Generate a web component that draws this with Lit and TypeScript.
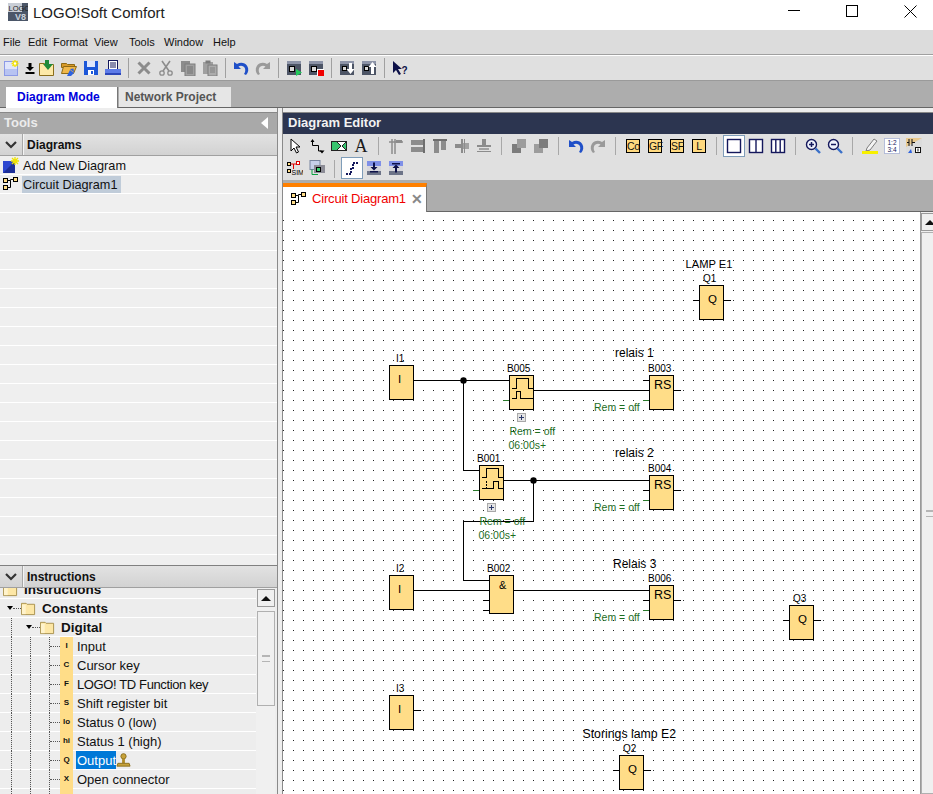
import {LitElement, html, svg, css} from 'lit';
import {customElement} from 'lit/decorators.js';

const NAVY = '#14185c';
const GRAY = '#8c8c8c';

// toolbar glyphs, all in a 16x16 box
const icons: Record<string, unknown> = {
  newDoc: svg`<rect x="0.5" y="1.5" width="13" height="14" fill="#dfe5fb" stroke="#8c9ae6"/><rect x="1" y="9" width="12" height="6" fill="#b7c3f2"/><path d="M11 0v7M7.5 3.5h7M8.5 1l5 5M13.5 1l-5 5" stroke="#f5e400" stroke-width="1.4"/><circle cx="11" cy="3.5" r="1.2" fill="#fff"/>`,
  download: svg`<path d="M6.5 3h3v4h2.5L8 11 4 7h2.5z" fill="#000"/><rect x="3.5" y="12" width="9" height="2" fill="#000"/>`,
  openGreen: svg`<path d="M0.5 3.5h5l1 1h8v11h-14z" fill="#fde9a8" stroke="#8a6d1c"/><path d="M6 0h4v4h4l-5 6-5-6h2z" fill="#1f8a3a"/>`,
  folder: svg`<path d="M0.5 3.5h5l1 1h7v3h-13z" fill="#d89a2a" stroke="#8f6a14"/><path d="M0.5 13.5l2-7h13l-3 7z" fill="#f0b84a" stroke="#8f6a14"/><path d="M6 16l3-6 4 3-3 3z" fill="#2d62e0"/><path d="M9 9l3.5-.5.5 4z" fill="#2d62e0"/>`,
  save: svg`<rect x="1" y="1" width="14" height="14" fill="#1c57d8"/><rect x="4" y="1" width="8" height="6" fill="#dfe7fb"/><rect x="5" y="10" width="6" height="5" fill="#fff"/><rect x="8" y="11" width="2" height="3" fill="#1c57d8"/>`,
  print: svg`<rect x="3.5" y="0.5" width="9" height="9" fill="#fff" stroke="${NAVY}"/><path d="M5 3h6M5 5h6M5 7h6" stroke="${NAVY}"/><rect x="0" y="9" width="16" height="4" fill="#5d7be8"/><rect x="0" y="13" width="16" height="2" fill="#2c46b8"/>`,
  cross: svg`<path d="M2.5 2.5l11 11M13.5 2.5l-11 11" stroke="${GRAY}" stroke-width="3"/>`,
  scissors: svg`<path d="M4 1l7 10M12 1L5 11" stroke="${GRAY}" stroke-width="1.6"/><circle cx="4" cy="13" r="2.2" fill="none" stroke="${GRAY}" stroke-width="1.3"/><circle cx="12" cy="13" r="2.2" fill="none" stroke="${GRAY}" stroke-width="1.3"/>`,
  copy: svg`<rect x="1" y="1" width="9" height="11" fill="${GRAY}"/><rect x="5" y="4" width="10" height="12" fill="#a0a0a0" stroke="#7c7c7c"/><path d="M7 7h6M7 9h6M7 11h6M7 13h6" stroke="#737373"/>`,
  paste: svg`<rect x="1" y="2" width="10" height="12" fill="#a0a0a0"/><rect x="3.5" y="0.5" width="5" height="3" fill="#7c7c7c"/><rect x="6" y="5" width="9" height="11" fill="#ababab" stroke="#7c7c7c"/><path d="M8 8h5M8 10h5M8 12h5" stroke="#808080"/>`,
  undo: svg`<path d="M1 2v7h7L5.500 6.500C8 5 11 6 12 8.500c.6 1.800.2 3.800-1 5.500l2 1c2.500-2.500 3-6 1.200-9C12 2.500 7.500 1.800 4 4z" fill="#2050c8"/>`,
  redo: svg`<path d="M15 2v7H8l2.500-2.500C8 5 5 6 4 8.500c-.6 1.800-.2 3.800 1 5.500l-2 1C.5 12.500 0 9 1.800 6 4 2.500 8.500 1.800 12 4z" fill="#9a9a9a"/>`,
  simStart: svg`<rect x="1" y="1" width="14" height="14" fill="#4d5566"/><rect x="1" y="1" width="14" height="3" fill="#8d94a8"/><rect x="3.500" y="6.500" width="5" height="5" fill="#d8d8d8" stroke="#000"/><path d="M10 9l6 3.500-6 3.500z" fill="#22c95a"/>`,
  simStop: svg`<rect x="1" y="1" width="14" height="14" fill="#4d5566"/><rect x="1" y="1" width="14" height="3" fill="#8d94a8"/><rect x="3.500" y="6.500" width="5" height="5" fill="#d8d8d8" stroke="#000"/><rect x="9" y="9" width="7" height="7" fill="#fff"/><rect x="10" y="10" width="6" height="6" fill="#f00000"/>`,
  xferDown: svg`<rect x="1" y="1" width="14" height="14" fill="#4d5566"/><rect x="1" y="1" width="14" height="3" fill="#8d94a8"/><rect x="3.500" y="6.500" width="4" height="4" fill="#d8d8d8" stroke="#000"/><path d="M10 3h3v6h2.500L11.500 14 7.500 9H10z" fill="#fff"/>`,
  xferUp: svg`<rect x="1" y="1" width="14" height="14" fill="#4d5566"/><rect x="1" y="1" width="14" height="3" fill="#8d94a8"/><rect x="3.500" y="6.500" width="4" height="4" fill="#d8d8d8" stroke="#000"/><path d="M10 14h3V7h2.500L11.500 2 7.500 7H10z" fill="#fff"/>`,
  help: svg`<path d="M1 1v12l3-3 3 5 2-1-3-5h4z" fill="#0c1048"/><text x="9.500" y="14" font-size="10" font-weight="700" fill="#0c1048">?</text>`,
  pointer: svg`<path d="M4 1v12l3-3 2.500 5 2-1-2.500-5h4z" fill="#fff" stroke="#000"/>`,
  route: svg`<path d="M3.500 3v4.500h6V13h3" fill="none" stroke="#000"/><path d="M1.500 4l2-3 2 3zM10.500 12.500h5L13 15.500z" fill="#000"/>`,
  diode: svg`<rect x="0.500" y="3.500" width="15" height="9" fill="#fff" stroke="#222"/><path d="M1 4h5l4 4-4 4H1z" fill="#37c46e"/><path d="M15 4v8l-4-4z" fill="#37c46e"/><path d="M6 4l4 4-4 4M15 4l-4 4 4 4" fill="none" stroke="#222"/>`,
  letterA: svg`<text x="8" y="14" text-anchor="middle" font-family="Liberation Serif, serif" font-size="18" fill="#1a1a1a">A</text>`,
  alignL: svg`<path d="M4 1v15M7 1v15M1 4h14" stroke="${GRAY}" stroke-width="1.500" fill="none"/><rect x="8" y="2" width="6" height="3" fill="${GRAY}"/>`,
  alignR: svg`<rect x="1" y="2" width="12" height="5" fill="${GRAY}"/><rect x="1" y="9" width="12" height="5" fill="${GRAY}"/><rect x="13" y="1" width="2" height="14" fill="#6e6e6e"/>`,
  alignT: svg`<rect x="1" y="1" width="14" height="2" fill="#6e6e6e"/><rect x="2" y="3" width="5" height="12" fill="${GRAY}"/><rect x="9" y="3" width="5" height="9" fill="${GRAY}"/>`,
  alignM: svg`<rect x="7" y="1" width="2" height="14" fill="${GRAY}"/><rect x="1" y="6" width="6" height="4" fill="${GRAY}"/><rect x="9" y="5" width="6" height="6" fill="#a2a2a2"/><rect x="10" y="1" width="1" height="14" fill="${GRAY}"/>`,
  alignC: svg`<rect x="1" y="7" width="14" height="2" fill="${GRAY}"/><rect x="6" y="1" width="4" height="6" fill="${GRAY}"/><rect x="3" y="10" width="10" height="2" fill="#a2a2a2"/><rect x="1" y="13" width="14" height="1" fill="${GRAY}"/>`,
  groupA: svg`<rect x="1" y="6" width="9" height="9" fill="#7c7c7c"/><rect x="6" y="1" width="9" height="9" fill="#9c9c9c"/>`,
  groupB: svg`<rect x="1" y="6" width="9" height="9" fill="#9c9c9c"/><rect x="6" y="1" width="9" height="9" fill="#7c7c7c"/>`,
  col1: svg`<rect x="1.500" y="1.500" width="13" height="13" fill="#fff" stroke="${NAVY}" stroke-width="1.400"/>`,
  col2: svg`<rect x="1.500" y="1.500" width="13" height="13" fill="#fff" stroke="${NAVY}" stroke-width="1.400"/><path d="M8 2v12" stroke="${NAVY}" stroke-width="1.400"/>`,
  col3: svg`<rect x="1.500" y="1.500" width="13" height="13" fill="#fff" stroke="${NAVY}" stroke-width="1.400"/><path d="M5.800 2v12M10.200 2v12" stroke="${NAVY}" stroke-width="1.400"/>`,
  zoomIn: svg`<circle cx="6.500" cy="6.500" r="5" fill="#eef1fb" stroke="${NAVY}" stroke-width="1.400"/><path d="M4 6.500h5M6.500 4v5" stroke="${NAVY}" stroke-width="1.500"/><path d="M10.500 10.500l4.500 4.500" stroke="#3a70c8" stroke-width="2.400"/>`,
  zoomOut: svg`<circle cx="6.500" cy="6.500" r="5" fill="#eef1fb" stroke="${NAVY}" stroke-width="1.400"/><path d="M4 6.500h5" stroke="${NAVY}" stroke-width="1.500"/><path d="M10.500 10.500l4.500 4.500" stroke="#3a70c8" stroke-width="2.400"/>`,
  marker: svg`<path d="M5 10l7-9 3 2-7 9-4 1z" fill="#f4f4f4" stroke="#7d7d7d"/><rect x="0" y="13" width="16" height="3" fill="#f7f000"/>`,
  numbers: svg`<rect x="0.500" y="0.500" width="15" height="15" fill="#fff" stroke="#7c8cc4" stroke-dasharray="1 1"/><text x="8" y="7" text-anchor="middle" font-size="6.500" fill="${NAVY}">1:2</text><text x="8" y="14" text-anchor="middle" font-size="6.500" fill="${NAVY}">3:4</text>`,
  pins: svg`<rect x="0" y="0" width="16" height="16" fill="#e9c98e"/><path d="M0 16V9L16 0v16z" fill="#dcdcdc"/><path d="M3 1v7M6 1v7M1 4.500h2M6 4.500h3" stroke="#111"/><path d="M2 15l3-4 1 4z" fill="#2d62e0"/><rect x="9.500" y="9.500" width="5" height="5" fill="#fff" stroke="#111"/><path d="M12 10.500v3" stroke="#111"/>`,
  sim: svg`<rect x="0.500" y="2.500" width="3" height="3" fill="#ffdd88" stroke="#000"/><rect x="0.500" y="9.500" width="3" height="3" fill="#ffdd88" stroke="#000"/><path d="M3.500 4h3v5M6.500 4H9" stroke="#e00000" fill="none"/><rect x="9.500" y="1.500" width="3" height="3" fill="#fff" stroke="#e00000"/><text x="4.500" y="14.500" font-size="7" fill="#000">SIM</text>`,
  layer: svg`<rect x="1" y="0.500" width="10" height="9" fill="#c6d0ea" stroke="#77849f"/><rect x="5" y="5" width="11" height="8" fill="#8c8c96"/><path d="M3 9.500v5h6" stroke="#0aa040" fill="none"/><rect x="7.500" y="7.500" width="4" height="4" fill="#37d070" stroke="#000"/>`,
  steps: svg`<path d="M2 14h5V8h2V3h5" fill="none" stroke="${NAVY}" stroke-width="2" stroke-dasharray="2 1"/>`,
  insDown: svg`<rect x="1" y="1" width="14" height="5" fill="#7f90e8"/><rect x="1" y="6" width="14" height="5" fill="#d7d7dd"/><rect x="1" y="11" width="14" height="4" fill="#6d7488"/><path d="M7 2.500h2V7h2.500L8 10.500 4.500 7H7z" fill="#0c1048"/><rect x="4" y="11" width="8" height="1.500" fill="#0c1048"/>`,
  insUp: svg`<rect x="1" y="1" width="14" height="5" fill="#7f90e8"/><rect x="1" y="6" width="14" height="5" fill="#d7d7dd"/><rect x="1" y="11" width="14" height="4" fill="#6d7488"/><path d="M7 12.500h2V8h2.500L8 4.500 4.500 8H7z" fill="#0c1048"/><rect x="4" y="3" width="8" height="1.500" fill="#0c1048"/>`,
  circuit: svg`<rect x="0.500" y="2.500" width="4" height="4" fill="#ffdd88" stroke="#000"/><rect x="0.500" y="9.500" width="4" height="4" fill="#ffdd88" stroke="#000"/><rect x="10.500" y="1.500" width="4" height="4" fill="#ffdd88" stroke="#000"/><path d="M4.500 4.500h3V3.500h3M7.500 4.500v7h-3" fill="none" stroke="#000"/>`,
  addDiagram: svg`<rect x="0" y="4" width="12" height="12" fill="#2d47d0"/><path d="M0 16L12 4v12z" fill="#1d2f98"/><path d="M12 0v8M8 4h8M9 1l6 6M15 1l-6 6" stroke="#f0e400" stroke-width="1.300"/>`,
  folderTree: svg`<path d="M0.500 2.500h5l1 1h8v11h-14z" fill="#fde7a6" stroke="#a8904c"/><rect x="1" y="4" width="4" height="10" fill="#fff3cc"/>`,
  stamp: svg`<circle cx="8" cy="3.500" r="2.800" fill="#c7a23a" stroke="#8a6d1c"/><rect x="6.500" y="6" width="3" height="5" fill="#b08c28"/><path d="M2 11h12l1 3H1z" fill="#c7a23a" stroke="#8a6d1c"/>`,
};

const ic = (name: string, size = 16) =>
  html`<svg width=${size} height=${size} viewBox="0 0 16 16" font-family="Liberation Sans, sans-serif">${icons[name]}</svg>`;

const mainTools = ['newDoc', 'download', 'openGreen', 'folder', 'save', 'print', '|', 'cross', 'scissors', 'copy', 'paste', '|', 'undo', 'redo', '|', 'simStart', 'simStop', '|', 'xferDown', 'xferUp', '|', 'help'];
const editorRow1 = ['pointer', 'route', 'diode', 'letterA', '|', 'alignL', 'alignR', 'alignT', 'alignM', 'alignC', '|', 'groupA', 'groupB', '|', 'undo', 'redo', '|', 'Co', 'GF', 'SF', 'L', '|', '*col1', 'col2', 'col3', '|', 'zoomIn', 'zoomOut', '|', 'marker', 'numbers', 'pins'];
const editorRow2 = ['sim', 'layer', '|', '*steps', 'insDown', 'insUp'];
const menus = ['File', 'Edit', 'Format', 'View', 'Tools', 'Window', 'Help'];

const leaves = [
  ['I', 'Input'], ['C', 'Cursor key'], ['F', 'LOGO! TD Function key'], ['S', 'Shift register bit'],
  ['lo', 'Status 0 (low)'], ['hi', 'Status 1 (high)'], ['Q', 'Output'], ['X', 'Open connector'], ['M', 'Flag'],
];

// diagram nodes use page coordinates, the viewBox of the canvas starts at 283,212
const blocks = [
  {x: 389, y: 365, h: 34, id: 'I1', lx: 396, sym: 'I'},
  {x: 509, y: 375, h: 34, id: 'B005', lx: 507, sym: ''},
  {x: 649, y: 375, h: 34, id: 'B003', lx: 648, sym: 'RS'},
  {x: 479, y: 465, h: 34, id: 'B001', lx: 477, sym: ''},
  {x: 649, y: 475, h: 34, id: 'B004', lx: 648, sym: 'RS'},
  {x: 389, y: 575, h: 34, id: 'I2', lx: 396, sym: 'I'},
  {x: 489, y: 575, h: 38, id: 'B002', lx: 487, sym: '&'},
  {x: 649, y: 585, h: 34, id: 'B006', lx: 648, sym: 'RS'},
  {x: 389, y: 695, h: 34, id: 'I3', lx: 396, sym: 'I'},
  {x: 699, y: 285, h: 34, id: 'Q1', lx: 703, sym: 'Q'},
  {x: 789, y: 605, h: 34, id: 'Q3', lx: 793, sym: 'Q'},
  {x: 619, y: 755, h: 34, id: 'Q2', lx: 623, sym: 'Q'},
];

const wires = 'M414 380.500H509M463.500 380.500V470.500H479M534 390.500H649M504 480.500H649M533.500 480.500V521.500H463.500V580.500H489M414 590.500H489M514 590.500H649'
  + 'M643 380.500H649M674 390.500H681M643 490.500H649M674 490.500H681M483 600.500H489M483 610.500H489M643 600.500H649M674 600.500H681'
  + 'M414 710.500H421M613 770.500H619M644 770.500H651M783 620.500H789M814 620.500H821M693 300.500H699M724 300.500H731';
const greenStubs = 'M503 400.500H509M643 400.500H649M473 490.500H479M643 500.500H649M643 610.500H649';
const pulses = 'M512 388.500H516V378.500H528V388.500H532.500M512 398.500H516V391.500H520V398.500H532.500'
  + 'M482 477.500H486V468.500H498V477.500H502.500M482 488.500H493V481.500H498V488.500H502.500';

const captions = [
  {x: 615, y: 357, t: 'relais 1', s: 12}, {x: 615, y: 457, t: 'relais 2', s: 12}, {x: 613, y: 568, t: 'Relais 3', s: 12},
  {x: 685.500, y: 268, t: 'LAMP E1', s: 11.200}, {x: 582.500, y: 738, t: 'Storings lamp E2', s: 12.300},
];
const greens = [
  {x: 594, y: 411, t: 'Rem = off'}, {x: 509.500, y: 435, t: 'Rem = off'}, {x: 508.500, y: 449, t: '06:00s+'},
  {x: 479.500, y: 525, t: 'Rem = off'}, {x: 478.500, y: 539, t: '06:00s+'}, {x: 594, y: 511, t: 'Rem = off'}, {x: 594, y: 621, t: 'Rem = off'},
];

@customElement('app-root')
export class AppRoot extends LitElement {
  static styles = css`
    :host {
      display: block;
      width: 933px;
      height: 794px;
      overflow: hidden;
      background: #efefef;
      color: #111;
      font-family: 'Liberation Sans', Arial, sans-serif;
      font-size: 12px;
    }
    svg { display: block; flex: none; }

    .titlebar { height: 30px; background: #fff; display: flex; align-items: center; padding-left: 8px; }
    .logo { margin-right: 5px; margin-top: -6px; }
    .app-title { font-size: 15px; margin-top: -6px; color: #222; }
    .win { margin-left: auto; display: flex; margin-top: -8px; margin-right: 16px; gap: 46px; }

    .menubar {
      height: 24px;
      background: #dcdcdc;
      border-bottom: 1px solid #a0a0a0;
      display: grid;
      grid-template-columns: 25px 25px 41px 35px 35px 49px auto;
      align-items: center;
      padding-left: 3px;
      font-size: 11px;
      line-height: 24px;
    }

    .maintools {
      height: 24px;
      background: #e0e0e0;
      border-top: 1px solid #fff;
      border-bottom: 1px solid #9a9a9a;
      display: flex;
      align-items: center;
      padding-left: 1px;
    }
    .mbtn { width: 22px; height: 24px; display: flex; align-items: center; justify-content: center; flex: none; }
    .mbtn.narrow { width: 13px; }
    .msep { width: 9px; height: 20px; flex: none; display: flex; justify-content: center; }
    .msep::before { content: ''; width: 1px; background: #a0a0a0; }

    .modes {
      height: 26px;
      background: #adadad;
      border-bottom: 1px solid #666;
      display: flex;
      align-items: flex-end;
      padding-left: 6px;
      gap: 1px;
    }
    .mode {
      width: 112px;
      height: 20px;
      box-sizing: border-box;
      line-height: 20px;
      padding-left: 6px;
      font-weight: 700;
      background: #e6e6e6;
      color: #555;
    }
    .mode.on { background: #fff; color: #0000dc; height: 21px; margin-bottom: -1px; border-right: 1px solid #777; padding-left: 11px; }

    .work { display: flex; height: 686px; background: #ededed; }

    .left { width: 277px; flex: none; border-right: 1px solid #8a8a8a; display: flex; flex-direction: column; padding-top: 4px; }
    .tools-head {
      height: 20px;
      padding-bottom: 1px;
      border-top: 1px solid #888;
      background: #a9a9a9;
      color: #ececec;
      font-size: 13px;
      font-weight: 700;
      line-height: 20px;
      padding-left: 4px;
      display: flex;
      align-items: center;
      justify-content: space-between;
    }
    .collapse { width: 0; height: 0; margin-right: 9px; border: 6px solid transparent; border-left: 0; border-right: 7px solid #fff; }
    .acc {
      height: 21px;
      background: linear-gradient(#e2e2e2, #d2d2d2);
      border-bottom: 1px solid #a0a0a0;
      display: flex;
      align-items: center;
      font-weight: 700;
      flex: none;
    }
    .acc .chev { width: 22px; height: 100%; border-right: 1px solid #a8a8a8; box-shadow: 1px 0 0 #f4f4f4; margin-right: 4px; display: flex; align-items: center; justify-content: center; }
    .list {
      flex: 1;
      background: repeating-linear-gradient(#efefef 0 18px, #fff 18px 19px);
      font-size: 12.700px;
    }
    .list-row { height: 19px; display: flex; align-items: center; padding-left: 3px; gap: 4px; box-sizing: border-box; padding-bottom: 1px; }
    .list-row span { line-height: 16px; padding: 1px 4px 0 1px; margin-left: -1px; }
    .list-row span.sel { background: #c0ccd9; }

    .instr { height: 229px; flex: none; border-top: 1px solid #808080; display: flex; flex-direction: column; box-sizing: border-box; }
    .instr-body { flex: 1; min-height: 0; display: flex; overflow: hidden; }
    .tree { width: 256px; flex: none; margin-top: -8px; font-size: 13px; }
    .node {
      height: 19px;
      border-bottom: 1px solid #fff;
      box-sizing: border-box;
      display: flex;
      align-items: center;
      white-space: nowrap;
    }
    .node span { line-height: 16px; padding-top: 2px; }
    .node.bold { font-weight: 700; font-size: 13.500px; }
    .caret { width: 0; height: 0; flex: none; border: 3.500px solid transparent; border-bottom: 0; border-top: 4px solid #000; }
    .guide { align-self: stretch; flex: none; border-left: 1px dotted #555; box-sizing: border-box; margin-bottom: -1px; }
    .conn { flex: none; border-top: 1px dotted #555; }
    .pic { width: 13px; align-self: stretch; flex: none; background: #ffdd88; font-size: 8px; font-weight: 700; line-height: 18px; text-align: center; margin-bottom: -1px; }
    .hl { background: #0078d7; color: #fff; margin-left: 3px; padding-left: 1px; }
    .label { margin-left: 4px; }
    .label.tight { letter-spacing: -0.380px; }
    .node .name { margin-left: 6px; }

    .sb { background: #f0f0f0; width: 19px; flex: none; display: flex; flex-direction: column; align-items: center; padding-left: 1px; box-sizing: border-box; }
    .sb-up { width: 18px; height: 18px; flex: none; border: 1px solid #9a9a9a; box-sizing: border-box; display: flex; align-items: center; justify-content: center; margin-bottom: 4px; background: #f0f0f0; }
    .sb-up::before { content: ''; width: 0; height: 0; border: 5px solid transparent; border-top: 0; border-bottom: 5px solid #111; }
    .sb-thumb { width: 18px; border: 1px solid #b0b0b0; box-sizing: border-box; display: flex; align-items: center; justify-content: center; background: #f0f0f0; }
    .sb-thumb::before { content: ''; width: 8px; height: 5px; border-top: 1px solid #b5b5b5; border-bottom: 1px solid #b5b5b5; box-shadow: inset 0 2px 0 -1px #b5b5b5; }
    .instr .sb { padding-top: 1px; }
    .instr .sb-thumb { height: 95px; }

    .gap { width: 4px; flex: none; }
    .right { width: 650px; flex: none; padding-top: 4px; border-left: 1px solid #8a8a8a; display: flex; flex-direction: column; }
    .editor-head {
      height: 21px;
      flex: none;
      border-top: 1px solid #888;
      background: #2c3550;
      color: #f2f2f2;
      font-size: 13px;
      font-weight: 700;
      line-height: 19px;
      padding-left: 5px;
    }
    .etools { height: 46px; flex: none; background: #e0e0e0; }
    .erow { height: 23px; display: flex; padding-left: 1px; }
    .erow.first { align-items: flex-end; }
    .erow.second { align-items: flex-start; }
    .ebtn { width: 22px; height: 22px; display: flex; align-items: center; justify-content: center; flex: none; box-sizing: border-box; }
    .ebtn.sel { background: #fff; border: 1px solid #7f9db9; }
    .esep { width: 13px; height: 18px; flex: none; align-self: center; display: flex; justify-content: center; }
    .esep::before { content: ''; width: 1px; background: #a8a8a8; }
    .blockbtn {
      width: 14px;
      height: 14px;
      box-sizing: border-box;
      border: 1px solid #000;
      background: #ffd97f;
      font-size: 10.500px;
      line-height: 12px;
      text-align: center;
      letter-spacing: -0.300px;
    }

    .doc-tabs { height: 32px; flex: none; box-sizing: border-box; background: #adadad; border-bottom: 1px solid #666; padding-top: 3px; }
    .doc-tab {
      width: 144px;
      height: 29px;
      box-sizing: border-box;
      background: #fff;
      border-top: 4px solid #ff8000;
      border-right: 1px solid #777;
      display: flex;
      align-items: center;
      padding: 0 0 2px 8px;
      font-size: 13px;
      color: #f00000;
      white-space: nowrap;
      position: relative;
      z-index: 1;
    }
    .doc-tab span { margin-left: 5px; letter-spacing: -0.180px; }
    .doc-tab b { margin-left: 5px; color: #888; font-size: 14px; }

    .canvas-wrap { flex: 1; min-height: 0; display: flex; }
    .canvas { background: #fff; }
    .canvas-wrap .sb { border-left: 1px solid #9a9a9a; padding-left: 0; padding-top: 1px; }
    .canvas-wrap .sb-thumb { flex: 1; }
    .canvas-wrap .sb-up { margin-bottom: 1px; }
  `;

  private tool(name: string) {
    if (name === '|') return html`<div class="msep"></div>`;
    return html`<div class="mbtn ${name === 'download' ? 'narrow' : ''}">${ic(name)}</div>`;
  }

  private editorTool(name: string) {
    if (name === '|') return html`<div class="esep"></div>`;
    if (name.length <= 2) return html`<div class="ebtn"><div class="blockbtn">${name}</div></div>`;
    const selected = name.startsWith('*');
    return html`<div class="ebtn ${selected ? 'sel' : ''}">${ic(name.replace('*', ''))}</div>`;
  }

  private diagram() {
    return html`<svg class="canvas" width="637" height="582" viewBox="283 212 637 582" font-family="Liberation Sans, Arial, sans-serif">
      <defs>
        <pattern id="dots" width="10" height="10" patternUnits="userSpaceOnUse"><rect x="3" y="0" width="1" height="1" fill="#222"/></pattern>
      </defs>
      <rect x="283" y="212" width="637" height="582" fill="url(#dots)"/>
      <path d=${wires} fill="none" stroke="#000" shape-rendering="crispEdges"/>
      <path d=${greenStubs} fill="none" stroke="#2a7a2a" shape-rendering="crispEdges"/>
      <circle cx="463.500" cy="380.500" r="3.200" fill="#000"/>
      <circle cx="533.500" cy="480.500" r="3.200" fill="#000"/>
      ${blocks.map(b => svg`
        <rect x=${b.x + 0.5} y=${b.y + 0.5} width="24" height=${b.h} fill="#ffdd88" stroke="#000" shape-rendering="crispEdges"/>
        <text x=${b.lx} y=${b.y - 3} font-size="10">${b.id}</text>
        ${b.sym === 'RS' ? svg`<text x=${b.x + 5} y=${b.y + 14} font-size="12.500">RS</text>` : ''}
        ${b.sym === '&' ? svg`<text x=${b.x + 10} y=${b.y + 14} font-size="11">&amp;</text>` : ''}
        ${b.sym === 'Q' ? svg`<text x=${b.x + 9} y=${b.y + 18} font-size="11.500">Q</text>` : ''}
        ${b.sym === 'I' ? svg`<text x=${b.x + 9} y=${b.y + 18} font-size="11.500">I</text>` : ''}
      `)}
      <path d=${pulses} fill="none" stroke="#000" shape-rendering="crispEdges"/>
      <path d="M486.500 481V488" stroke="#000" stroke-dasharray="2 1" shape-rendering="crispEdges"/>
      ${[[517, 413], [487, 503]].map(([x, y]) => svg`
        <rect x=${x + 0.5} y=${y + 0.5} width="8" height="8" fill="#e4e4e4" stroke="#a8a8a8" shape-rendering="crispEdges"/>
        <path d=${`M${x + 2} ${y + 4.5}h5M${x + 4.5} ${y + 2}v5`} stroke="#2c3a6a" shape-rendering="crispEdges"/>
      `)}
      ${captions.map(c => svg`<text x=${c.x} y=${c.y} font-size=${c.s}>${c.t}</text>`)}
      ${greens.map(g => svg`<text x=${g.x} y=${g.y} font-size="10.500" fill="#1e6e1e">${g.t}</text>`)}
    </svg>`;
  }

  render() {
    return html`
      <div class="titlebar">
        <svg class="logo" width="20" height="18" viewBox="0 0 20 18" font-family="Liberation Sans, sans-serif">
          <rect width="20" height="18" fill="#4b5668"/>
          <rect width="14" height="9" fill="#c9ced6"/>
          <text x="0.500" y="8" font-size="7.500" fill="#222">LOGO</text>
          <text x="7" y="16.500" font-size="9" font-weight="700" fill="#c9d0da">V8</text>
        </svg>
        <div class="app-title">LOGO!Soft Comfort</div>
        <div class="win">
          <svg width="12" height="12" viewBox="0 0 12 12"><path d="M0 5.500h12" stroke="#000"/></svg>
          <svg width="12" height="12" viewBox="0 0 12 12"><rect x="0.500" y="0.500" width="11" height="11" fill="none" stroke="#000"/></svg>
          <svg width="13" height="13" viewBox="0 0 13 13"><path d="M.5.500l12 12M12.500.500l-12 12" stroke="#000"/></svg>
        </div>
      </div>
      <div class="menubar">${menus.map(m => html`<div>${m}</div>`)}</div>
      <div class="maintools">${mainTools.map(t => this.tool(t))}</div>
      <div class="modes">
        <div class="mode on">Diagram Mode</div>
        <div class="mode">Network Project</div>
      </div>
      <div class="work">
        <div class="left">
          <div class="tools-head">Tools<div class="collapse"></div></div>
          <div class="acc">
            <div class="chev"><svg width="12" height="8" viewBox="0 0 12 8"><path d="M1 1l5 5 5-5" fill="none" stroke="#333" stroke-width="2.200"/></svg></div>
            Diagrams
          </div>
          <div class="list">
            <div class="list-row">${ic('addDiagram')}<span>Add New Diagram</span></div>
            <div class="list-row">${ic('circuit')}<span class="sel">Circuit Diagram1</span></div>
          </div>
          <div class="instr">
            <div class="acc">
              <div class="chev"><svg width="12" height="8" viewBox="0 0 12 8"><path d="M1 1l5 5 5-5" fill="none" stroke="#333" stroke-width="2.200"/></svg></div>
              Instructions
            </div>
            <div class="instr-body">
              <div class="tree">
                <div class="node bold" style="padding-left:3px">${ic('folderTree', 15)}<span class="name">Instructions</span></div>
                <div class="node bold" style="padding-left:7px"><div class="caret"></div><div class="conn" style="width:8px"></div>${ic('folderTree', 15)}<span class="name">Constants</span></div>
                <div class="node bold" style="padding-left:11px"><div class="guide" style="width:15px"></div><div class="caret"></div><div class="conn" style="width:8px"></div>${ic('folderTree', 15)}<span class="name">Digital</span></div>
                ${leaves.map(([k, label]) => html`
                  <div class="node" style="padding-left:11px">
                    <div class="guide" style="width:19px"></div><div class="guide" style="width:19px"></div><div class="guide" style="width:1px"></div>
                    <div class="conn" style="width:10px"></div>
                    <div class="pic">${k}</div>
                    ${label === 'Output'
                      ? html`<span class="hl">${label}</span>${ic('stamp', 15)}`
                      : html`<span class="label ${label.startsWith('LOGO') ? 'tight' : ''}">${label}</span>`}
                  </div>`)}
              </div>
              <div class="sb"><div class="sb-up"></div><div class="sb-thumb"></div></div>
            </div>
          </div>
        </div>
        <div class="gap"></div>
        <div class="right">
          <div class="editor-head">Diagram Editor</div>
          <div class="etools">
            <div class="erow first">${editorRow1.map(t => this.editorTool(t))}</div>
            <div class="erow second">${editorRow2.map(t => this.editorTool(t))}</div>
          </div>
          <div class="doc-tabs">
            <div class="doc-tab">${ic('circuit')}<span>Circuit Diagram1</span><b>✕</b></div>
          </div>
          <div class="canvas-wrap">
            ${this.diagram()}
            <div class="sb"><div class="sb-up"></div><div class="sb-thumb"></div></div>
          </div>
        </div>
      </div>
    `;
  }
}
